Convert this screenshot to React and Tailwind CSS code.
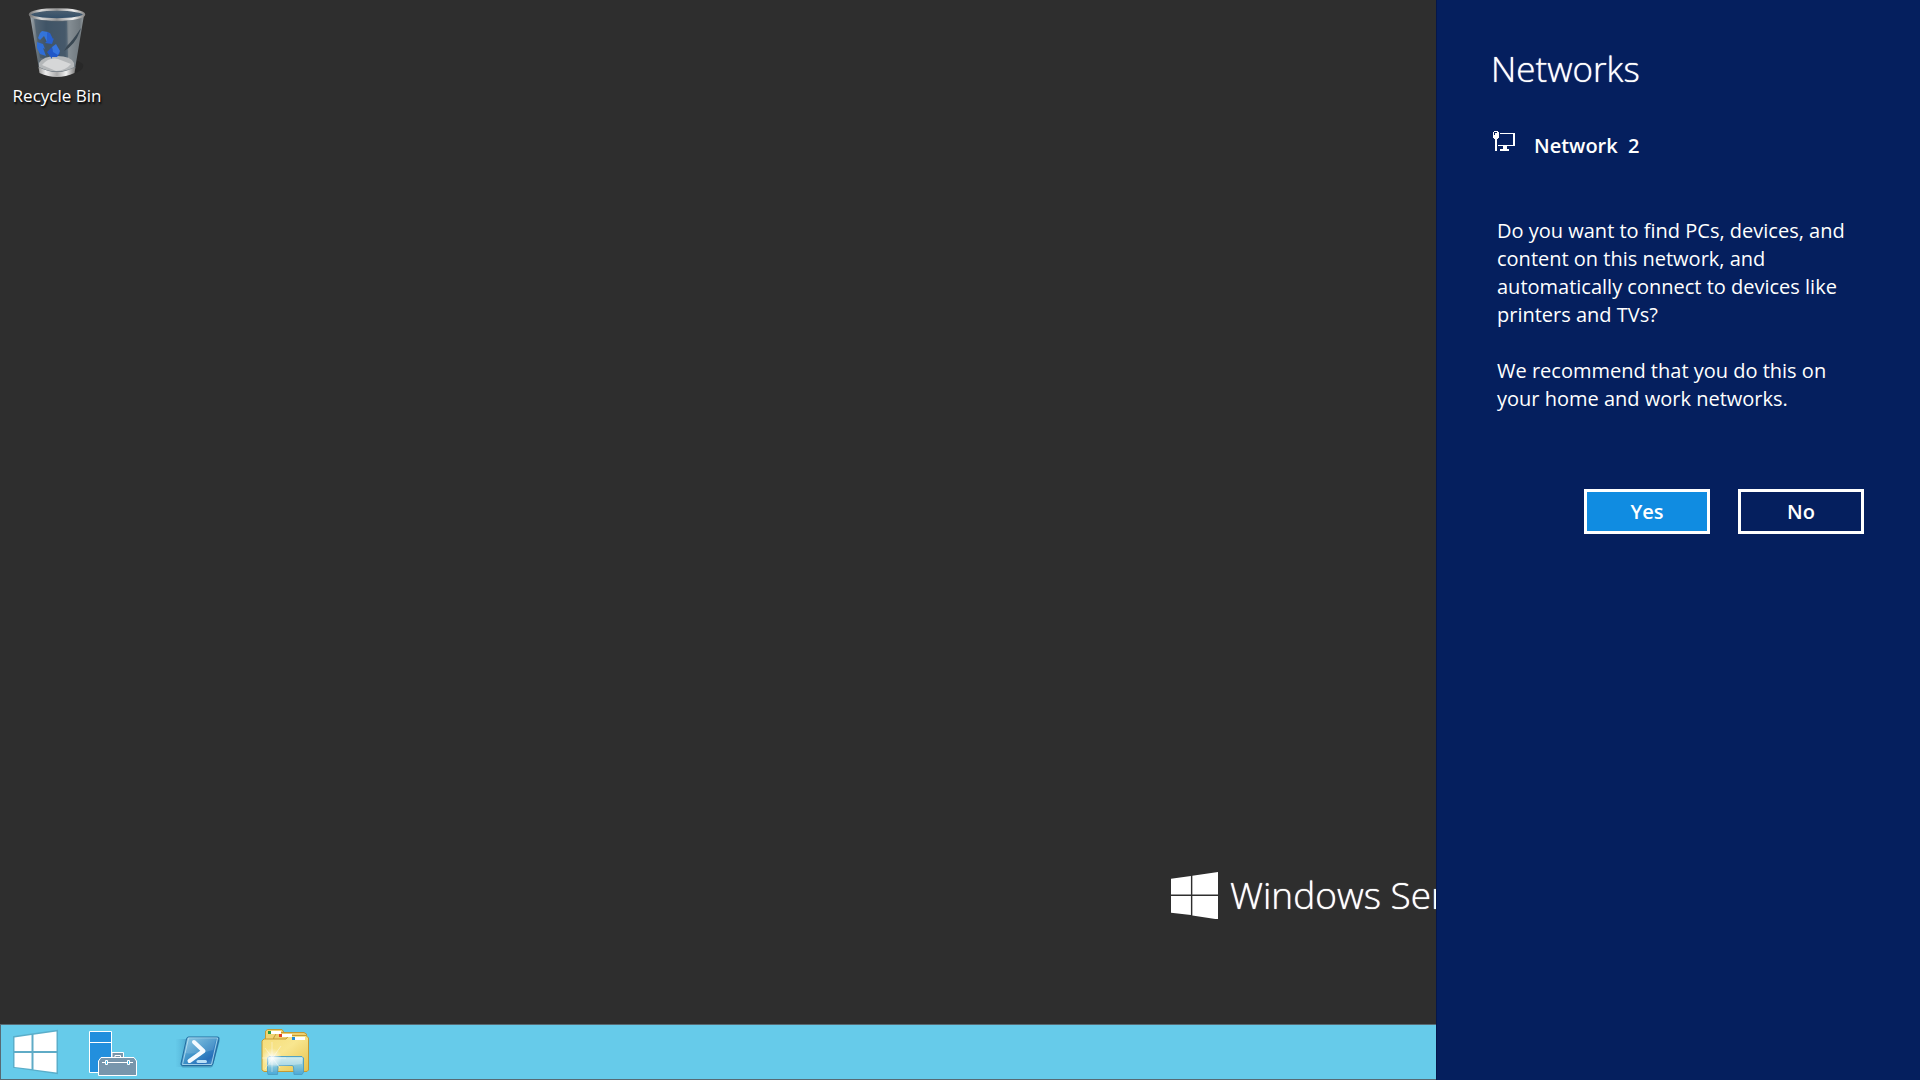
import React, { useState } from "react";

const WindowsLogo = ({ className }) => (
  <svg viewBox="0 0 46 46" className={className} fill="currentColor">
    <path d="M0 6.5 19.5 3.8V22H0zM20.9 3.6 46 0v22H20.9zM0 23.4h19.5v18.8L0 39.8zM20.9 23.4H46V46.4L20.9 42.6z" />
  </svg>
);

const StartIcon = () => (
  <svg viewBox="0 -1 46 46" className="h-[46px] w-[46px] overflow-visible">
    <path
      d="M1 7 44 1V43L1 37z"
      fill="#5fabc6"
      stroke="#5aaeca"
      strokeWidth="2"
    />
    <path
      d="M1.5 7.5 18.5 5V21H1.5zM20.5 4.7 43.5 1.5V21H20.5zM1.5 23H18.5V39L1.5 37zM20.5 23H43.5V42.5L20.5 39.4z"
      fill="#fff"
    />
  </svg>
);

const RecycleBinIcon = () => (
  <svg viewBox="0 0 64 72" className="h-[72px] w-16">
    <defs>
      <linearGradient id="binGlass" x1="0" x2="1" y1="0" y2="0">
        <stop offset="0" stopColor="#a4acb1" />
        <stop offset="0.12" stopColor="#69747c" />
        <stop offset="0.3" stopColor="#4b5a67" />
        <stop offset="0.65" stopColor="#56636e" />
        <stop offset="0.72" stopColor="#858e94" />
        <stop offset="0.92" stopColor="#70797f" />
        <stop offset="1" stopColor="#959b9e" />
      </linearGradient>
      <linearGradient id="binInside" x1="0" x2="0" y1="0" y2="1">
        <stop offset="0" stopColor="#4d6071" />
        <stop offset="1" stopColor="#304d68" />
      </linearGradient>
      <linearGradient id="binRim" x1="0" x2="1" y1="0" y2="0">
        <stop offset="0" stopColor="#777" />
        <stop offset="0.2" stopColor="#d8d8d8" />
        <stop offset="0.5" stopColor="#969696" />
        <stop offset="0.8" stopColor="#efefef" />
        <stop offset="1" stopColor="#8b8b8b" />
      </linearGradient>
      <linearGradient id="binBase" x1="0" x2="1" y1="0" y2="0">
        <stop offset="0" stopColor="#999" />
        <stop offset="0.2" stopColor="#eee" />
        <stop offset="0.5" stopColor="#aaa" />
        <stop offset="0.75" stopColor="#f1f1f1" />
        <stop offset="1" stopColor="#777" />
      </linearGradient>
    </defs>
    <path d="M42 69Q60 66 58 58L48 52z" fill="#222" opacity="0.5" />
    <path d="M5 9Q32 19 59 9L50 63Q32 71 14 63z" fill="url(#binGlass)" />
    <path d="M9 13Q30 17 42 15L43 52H15z" fill="#344d66" opacity="0.45" />
    <path d="M14 57Q18 50 32 50T49 57V61Q32 70 14 61z" fill="#b4b7b9" />
    <path d="M17 59Q24 51 33 53L46 58Q40 65 31 65z" fill="#d6d7d8" />
    <path d="M13.5 61Q32 71 50.5 61L49.5 67Q32 75 14.5 67z" fill="url(#binBase)" />
    <ellipse cx="32" cy="8.5" rx="27" ry="4.5" fill="url(#binInside)" />
    <ellipse
      cx="32"
      cy="8.5"
      rx="27"
      ry="5"
      fill="none"
      stroke="url(#binRim)"
      strokeWidth="2.5"
    />
    <path d="M55 25Q50 39 39 45L42 40Q48 34 56 22z" fill="#394752" />
    {/* recycling arrows */}
    <path d="M15 27 17 25 23 26 26 33 22 36 19 30 15 34 13 32z" fill="#3474da" />
    <path d="M22 26 25 27 28 33 29 32 27 38 20 37 22 35z" fill="#2861cf" />
    <path d="M12 36 18 38 20 43 18 42 21 50 15 48 12 42z" fill="#2f6dd6" />
    <path d="M22 46 27 41V44H33L35 47 32 51H27V53z" fill="#2157c8" />
    <path d="M27 41 31 38 35 45 33 49 28 46z" fill="#3675df" />
  </svg>
);

const ServerManagerIcon = () => (
  <svg viewBox="0 -3 48 48" className="h-12 w-12">
    <path d="M.5.5h22v41H.5z" fill="#228fdd" stroke="#fff" />
    <path d="M0 11.5h23" stroke="#fff" />
    <path
      d="M23 27V21.5h11.5V27M26 27v-2.5h5.5V27"
      fill="#7896ac"
      stroke="#fff"
    />
    <path
      d="M12 26.5H45L47.5 30V44.5H9.5V30z"
      fill="#7896ac"
      stroke="#fff"
    />
    <path d="M13 31.5h31" stroke="#fff" />
    <path
      d="M16.5 29.5h2v4h-2zM38.5 29.5h2v4h-2z"
      fill="#3fb4e5"
      stroke="#fff"
    />
  </svg>
);

const PowerShellIcon = () => (
  <svg viewBox="1 -1 46 34" className="h-[34px] w-[46px]">
    <defs>
      <linearGradient id="psBlue" x1="0" x2="1" y1="0" y2="1">
        <stop offset="0" stopColor="#84c8e5" />
        <stop offset="0.5" stopColor="#3b8fc7" />
        <stop offset="0.75" stopColor="#276fba" />
        <stop offset="1" stopColor="#65add8" />
      </linearGradient>
      <linearGradient id="psTrail" x1="0" x2="1" y1="0" y2="0">
        <stop offset="0" stopColor="#4faad0" stopOpacity="0" />
        <stop offset="1" stopColor="#3b91bd" />
      </linearGradient>
    </defs>
    <path d="M0 3H12L6 31H0z" fill="url(#psTrail)" opacity="0.6" />
    <path
      d="M14 3.5H43.5Q45 3.5 44.5 5.5L38 29.5Q37.5 31.5 35.5 31.5H8Q6 31.5 6.5 29z"
      fill="#276f99"
      opacity="0.5"
    />
    <path
      d="M13.5 1H42.5Q44.5 1 44 3L38 27.5Q37.5 29.5 35.5 29.5H7.500Q5.5 29.5 6 27.5L11.5 3Q12 1 13.5 1z"
      fill="url(#psBlue)"
      stroke="#236c9f"
    />
    <path
      d="M13.5 2H42.5L36.5 28.5H7.5z"
      fill="none"
      stroke="#b7e0f0"
      strokeWidth="0.8"
    />
    <path d="M13 3H41L38 14Q21 19 10 17z" fill="#fff" opacity="0.13" />
    <path
      d="M19 6 28.5 15 14.5 25"
      fill="none"
      stroke="#f4faff"
      strokeWidth="4"
      strokeLinecap="round"
      strokeLinejoin="round"
    />
    <path
      d="M23 25.5h7.5"
      stroke="#b9e0f7"
      strokeWidth="3"
      strokeLinecap="round"
    />
  </svg>
);

const ExplorerIcon = () => (
  <svg viewBox="0 0 48 48" className="h-12 w-12">
    <defs>
      <linearGradient id="folder" x1="0" x2="1" y1="0" y2="1">
        <stop offset="0" stopColor="#f5dc79" />
        <stop offset="0.45" stopColor="#f8e68f" />
        <stop offset="1" stopColor="#e6c24c" />
      </linearGradient>
      <linearGradient id="stand" x1="0" x2="0" y1="0" y2="1">
        <stop offset="0" stopColor="#c0e8ef" />
        <stop offset="0.5" stopColor="#80c7e2" />
        <stop offset="1" stopColor="#49a8d8" />
      </linearGradient>
      <radialGradient id="glow">
        <stop offset="0" stopColor="#fff" stopOpacity="0.9" />
        <stop offset="1" stopColor="#fff" stopOpacity="0" />
      </radialGradient>
    </defs>
    <g stroke="#c39a35">
      <path d="M4.5 14V3L6.5 1.5H21L23 4.5V14z" fill="#f0d473" />
      <path d="M12 14 13 9 16 4.5H43L45.5 6V14z" fill="#edcf6d" />
      <path
        d="M3 11H25L28 7.5H45L47.5 10V42L46 43.5H3L1 42V13z"
        fill="url(#folder)"
      />
    </g>
    <path d="M9 3h11v3H9zM20 6h11v3H20zM33 9h11v3H33z" fill="#fff" />
    <path d="M7 3h3v3H7z" fill="#2a9c42" />
    <path d="M18 6h3v3h-3z" fill="#e34320" />
    <path d="M31 9h3v3h-3z" fill="#218cd8" />
    <path
      d="M8 28.5H41L42.5 30V44L41 46.5H33L32.5 38.5 31 37.5H18L17 38.5 16.5 46.5H7L6.5 44V30z"
      fill="url(#stand)"
      stroke="#4c9fc5"
      opacity="0.95"
    />
    <path d="M8 30H41V36Q22 39 8 37z" fill="#fff" opacity="0.3" />
    <circle cx="11" cy="30" r="10" fill="url(#glow)" />
    <path
      d="M11 14v30M1 30h24M4 20l15 20M20 18 4 41"
      stroke="#fff"
      strokeWidth="0.6"
      opacity="0.7"
    />
  </svg>
);

const NetworkIcon = () => (
  <svg
    viewBox="0 0 23 21"
    className="h-[21px] w-[23px] shrink-0"
    shapeRendering="crispEdges"
    fill="#fff"
  >
    <path d="M7 2h15v1H7zM20 2h2v13h-2zM5 14h17v1H5zM10 15h4v3h-4zM7 18h9v2H7z" />
    <path d="M1 0h4v1h1v6H5v1H4v12H2V8H1V7H0V1h1zM1 1v3h1V2h2V1z" fillRule="evenodd" />
  </svg>
);

const taskbarItems = [
  { name: "Server Manager", icon: <ServerManagerIcon /> },
  { name: "Windows PowerShell", icon: <PowerShellIcon /> },
  { name: "File Explorer", icon: <ExplorerIcon /> },
];

const Taskbar = () => (
  <nav
    aria-label="Taskbar"
    className="flex h-14 shrink-0 items-center gap-[38px] border-y border-l border-[#576a73] bg-[#66cbea] pl-3"
  >
    <button aria-label="Start" className="-mr-2 flex">
      <StartIcon />
    </button>
    {taskbarItems.map((item) => (
      <button
        key={item.name}
        aria-label={item.name}
        className="flex w-12 justify-center"
      >
        {item.icon}
      </button>
    ))}
  </nav>
);

const Desktop = () => (
  <main className="flex min-w-0 flex-1 flex-col bg-[#2e2e2e]">
    <div className="flex flex-1 flex-col justify-between">
      <button className="flex w-[114px] flex-col items-center gap-2 pt-1.5 text-white">
        <RecycleBinIcon />
        <span className="text-[17px] leading-5 [text-shadow:1px_2px_2px_#000]">
          Recycle Bin
        </span>
      </button>

      {/* wallpaper branding, runs under the side panel */}
      <div className="mb-[101px] flex w-[265px] items-center gap-3 self-end overflow-hidden whitespace-nowrap text-white">
        <WindowsLogo className="h-[47px] w-[47px] shrink-0" />
        <span className="text-[37px] leading-[56px] font-light [text-shadow:0_0_1px_#fff]">
          Windows Server
        </span>
      </div>
    </div>
    <Taskbar />
  </main>
);

const NetworkPanel = () => {
  const [choice, setChoice] = useState("yes");

  const base =
    "h-[45px] w-[126px] border-3 border-white text-xl leading-6 font-semibold";

  return (
    <aside className="w-[484px] shrink-0 border-l border-[#04164b] bg-[#051f5e] pt-11 pr-14 pl-[54px] text-white">
      <h1 className="text-[35px] leading-[50px] font-light [text-shadow:0_0_1px_#fff]">
        Networks
      </h1>

      <div className="mt-[37px] ml-0.5 flex gap-[18px]">
        <NetworkIcon />
        <h2 className="text-xl leading-[30px] font-semibold whitespace-pre">
          Network  2
        </h2>
      </div>

      <div className="mt-14 ml-1.5 flex flex-col gap-7 text-xl leading-7">
        <p>
          Do you want to find PCs, devices, and content on this network, and
          automatically connect to devices like printers and TVs?
        </p>
        <p>We recommend that you do this on your home and work networks.</p>
      </div>

      <div className="mt-19 flex justify-end gap-7">
        <button
          onClick={() => setChoice("yes")}
          className={`${base} ${choice === "yes" ? "bg-[#108ce1]" : ""}`}
        >
          Yes
        </button>
        <button
          onClick={() => setChoice("no")}
          className={`${base} ${choice === "no" ? "bg-[#108ce1]" : ""}`}
        >
          No
        </button>
      </div>
    </aside>
  );
};

export default function App() {
  return (
    <div className="flex min-h-screen font-['Open_Sans','Noto_Sans',sans-serif]">
      <Desktop />
      <NetworkPanel />
    </div>
  );
}
